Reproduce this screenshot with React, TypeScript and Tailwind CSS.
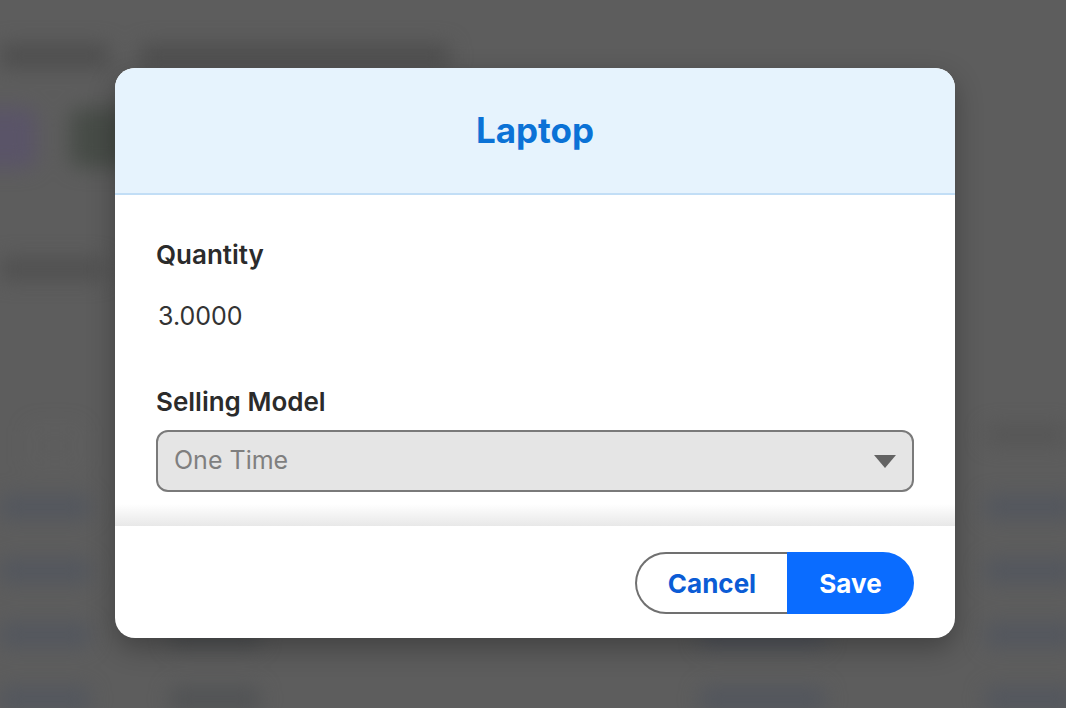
import React from 'react';

const font = { fontFamily: 'Inter, "Noto Sans", sans-serif' };

function Bar({ w, c = 'bg-[#4c4c4c]', h = 'h-[18px]' }: { w: string; c?: string; h?: string }) {
  return <div className={`${w} ${h} ${c} rounded-md shrink-0`} />;
}

// blurred page behind the dialog
function BackgroundPage() {
  const rows = [0, 1, 2, 3];
  return (
    <div className="blur-[10px] flex flex-col">
      <div className="mt-[44px] flex gap-[30px]">
        <Bar w="w-[110px]" h="h-[24px]" c="bg-[#4e4e4e]" />
        <Bar w="w-[310px]" h="h-[24px]" c="bg-[#4e4e4e]" />
      </div>
      <div className="mt-[40px] flex gap-[34px] -ml-[26px]">
        <div className="w-[62px] h-[60px] rounded-xl bg-[#5a5468]" />
        <div className="w-[60px] h-[60px] rounded-xl bg-[#474c47]" />
      </div>
      <div className="mt-[90px]">
        <Bar w="w-[105px]" h="h-[22px]" c="bg-[#505050]" />
      </div>
      <div className="mt-[146px] flex justify-between">
        <div className="ml-[30px] w-[50px] h-[40px] border-2 border-[#676767] rounded" />
        <Bar w="w-[80px]" c="bg-[#555555]" />
      </div>
      <div className="mt-[30px] flex flex-col gap-[42px]">
        {rows.map((r) => (
          <div key={r} className="flex items-center">
            <Bar w="w-[90px]" h="h-[22px]" c="bg-[#52565e]" />
            <div className="ml-[80px]">
              <Bar w="w-[90px]" h="h-[22px]" c="bg-[#505254]" />
            </div>
            <div className="ml-[440px]">
              <Bar w="w-[125px]" h="h-[22px]" c="bg-[#51555d]" />
            </div>
            <div className="ml-[160px]">
              <Bar w="w-[90px]" h="h-[22px]" c="bg-[#52565e]" />
            </div>
          </div>
        ))}
      </div>
    </div>
  );
}

export default function App() {
  return (
    <div className="relative w-[1066px] h-[708px] overflow-hidden bg-[#5d5d5d]" style={font}>
      <BackgroundPage />

      {/* dialog */}
      <div className="absolute inset-0 pt-[68px] pl-[115px]">
        <div className="w-[840px] h-[570px] flex flex-col rounded-[20px] overflow-hidden bg-white shadow-[0_10px_28px_rgba(0,0,0,0.3)]">
          <div className="h-[127px] shrink-0 flex items-center justify-center bg-[#e6f3fd] border-b-2 border-[#c2def6]">
            <h2 className="text-[35px] font-bold text-[#0b72d6] leading-none">Laptop</h2>
          </div>

          <div className="flex-1 flex flex-col">
            <div className="px-[41px] pt-[46px] flex-1">
              <div className="text-[26px] leading-[28px] font-semibold text-[#2b2b2b]">Quantity</div>
              <div className="mt-[33px] pl-[2px] text-[25px] leading-[28px] text-[#333333]">3.0000</div>
              <div className="mt-[58px] text-[26px] leading-[28px] font-semibold text-[#2b2b2b]">Selling Model</div>
              <div className="mt-[14px] h-[62px] flex items-center justify-between pl-[16px] pr-[16px] rounded-[12px] border-2 border-[#7a7a7a] bg-[#e5e5e5]">
                <span className="text-[25px] text-[#7f7f7f]">One Time</span>
                <svg width="22" height="13" viewBox="0 0 22 13">
                  <path d="M0 0 H22 L11 13 Z" fill="#636363" />
                </svg>
              </div>
            </div>
            <div className="h-[22px] bg-linear-to-b from-white to-[#e8e8e8]" />
          </div>

          <div className="h-[112px] shrink-0 flex items-center justify-end pr-[41px] pt-[2px]">
            <div className="flex h-[62px]">
              <button className="w-[152px] h-full rounded-l-full border-2 border-r-0 border-[#707070] bg-white text-[26px] font-bold text-[#0b5cd5]">
                Cancel
              </button>
              <button className="w-[127px] h-full rounded-r-full bg-[#0a6cff] text-[26px] font-bold text-white">
                Save
              </button>
            </div>
          </div>
        </div>
      </div>
    </div>
  );
}
